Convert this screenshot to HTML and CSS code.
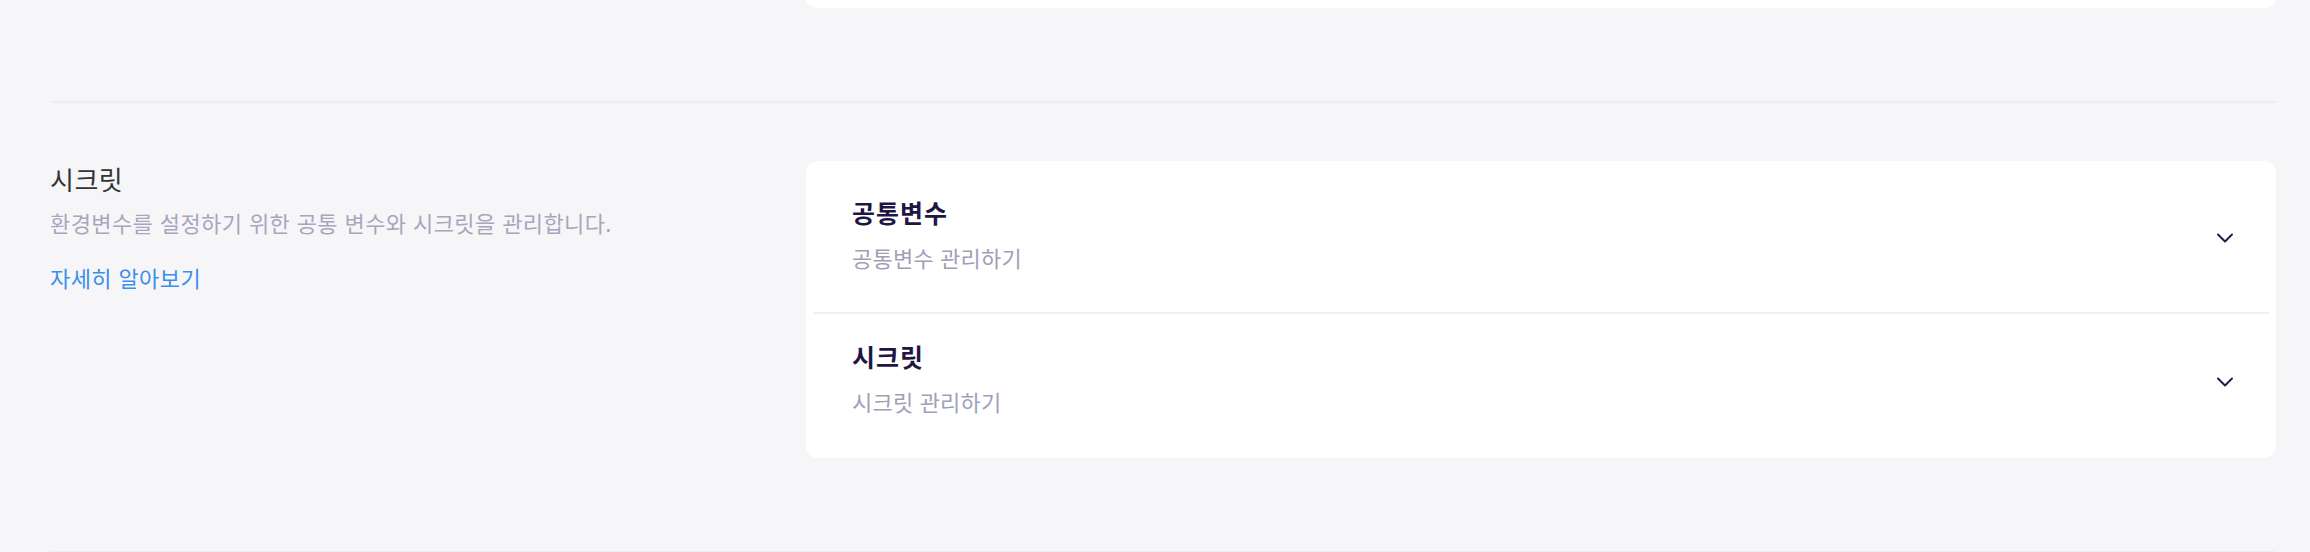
FILE: index.html
```html
<!DOCTYPE html>
<html lang="ko">
<head>
    <meta charset="utf-8">
    <title>설정 - 시크릿</title>
    <link rel="stylesheet" href="styles.css">
</head>
<body>
    <div class="page">
        <section class="settings-row">
            <div class="settings-info"></div>
            <div class="card card-stub"></div>
        </section>

        <section class="settings-row">
            <div class="settings-info">
                <h3 class="info-title">시크릿</h3>
                <p class="info-desc">환경변수를 설정하기 위한 공통 변수와 시크릿을 관리합니다.</p>
                <a href="#" class="info-link">자세히 알아보기</a>
            </div>

            <div class="card">
                <div class="accordion-item">
                    <div class="item-text">
                        <div class="item-title">공통변수</div>
                        <div class="item-sub">공통변수 관리하기</div>
                    </div>
                    <svg class="chevron" width="24" height="24" viewBox="0 0 24 24">
                        <polyline points="5,12.5 12,19.5 19,12.5" fill="none" stroke="currentColor" stroke-width="2" stroke-linecap="round" stroke-linejoin="round"/>
                    </svg>
                </div>
                <div class="accordion-item">
                    <div class="item-text">
                        <div class="item-title">시크릿</div>
                        <div class="item-sub">시크릿 관리하기</div>
                    </div>
                    <svg class="chevron" width="24" height="24" viewBox="0 0 24 24">
                        <polyline points="5,12.5 12,19.5 19,12.5" fill="none" stroke="currentColor" stroke-width="2" stroke-linecap="round" stroke-linejoin="round"/>
                    </svg>
                </div>
            </div>
        </section>
    </div>
</body>
</html>
```

FILE: styles.css
```css
body {
    margin: 0;
    background: #f6f6f8;
    font-family: "Noto Sans CJK KR", "Noto Sans", sans-serif;
    overflow: hidden;
}
.page {
    padding: 0 34px 0 50px;
}
.settings-row {
    display: flex;
    align-items: flex-start;
    padding: 58px 0 93px;
    border-bottom: 2px solid #eeeef1;
}
.settings-row:first-child {
    padding-top: 0;
}
.settings-info {
    width: 756px;
    flex-shrink: 0;
}
.info-title {
    margin: 0;
    font-size: 26px;
    line-height: 36px;
    letter-spacing: 0.5px;
    font-weight: 400;
    color: #333333;
}
.info-desc {
    margin: 10px 0 0;
    font-size: 22px;
    line-height: 30px;
    letter-spacing: 0.4px;
    color: #a8a6bc;
}
.info-link {
    display: inline-block;
    margin-top: 25px;
    font-size: 22px;
    line-height: 30px;
    letter-spacing: 0.4px;
    color: #3b8fe9;
    text-decoration: none;
}
.card {
    flex: 1;
    background: white;
    border-radius: 12px;
    padding: 9px 7px 2px;
}
.card-stub {
    height: 20px;
    margin-top: -12px;
    padding: 0;
}
.accordion-item {
    display: flex;
    align-items: center;
    padding: 25px 32px 40px 39px;
}
.accordion-item + .accordion-item {
    border-top: 2px solid #f0eff5;
}
.item-text {
    flex: 1;
}
.item-title {
    font-size: 25px;
    line-height: 34px;
    letter-spacing: 1px;
    font-weight: 700;
    color: #1f1743;
}
.item-sub {
    margin-top: 13px;
    font-size: 22px;
    line-height: 30px;
    letter-spacing: 0.2px;
    color: #a19fb6;
}
.chevron {
    color: #231b4b;
    display: block;
}
```
